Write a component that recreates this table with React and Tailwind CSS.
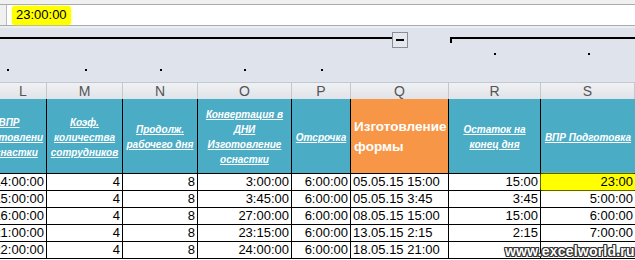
import React from "react";

const cols = [
  { letter: "L", w: "w-[47px]" },
  { letter: "M", w: "w-[76px]" },
  { letter: "N", w: "w-[75px]" },
  { letter: "O", w: "w-[94px]" },
  { letter: "P", w: "w-[59px]" },
  { letter: "Q", w: "w-[98px]" },
  { letter: "R", w: "w-[92px]" },
  { letter: "S", w: "w-[94px]" },
];

const rows = [
  ["14:00:00", "4", "8", "3:00:00", "6:00:00", "05.05.15 15:00", "15:00", "23:00"],
  ["15:00:00", "4", "8", "3:45:00", "6:00:00", "05.05.15 3:45", "3:45", "5:00:00"],
  ["16:00:00", "4", "8", "27:00:00", "6:00:00", "08.05.15 15:00", "15:00", "6:00:00"],
  ["21:00:00", "4", "8", "23:15:00", "6:00:00", "13.05.15 2:15", "2:15", "7:00:00"],
  ["22:00:00", "4", "8", "24:00:00", "6:00:00", "18.05.15 21:00", "", ""],
];

const dots = [
  "left-[7px] top-[41px]",
  "left-[85px] top-[41px]",
  "left-[160px] top-[41px]",
  "left-[244px] top-[41px]",
  "left-[321px] top-[41px]",
  "left-[494px] top-[25px]",
  "left-[588px] top-[25px]",
];

function HeadText({ children }) {
  return (
    <div className="text-center text-[10px] leading-[15px] font-bold italic underline text-white">
      {children}
    </div>
  );
}

export default function App() {
  return (
    <div className="w-[635px] h-[260px] overflow-hidden bg-white font-['Liberation_Sans',Arial,sans-serif] relative">
      {/* formula bar */}
      <div className="h-[4px] bg-[#f0f0f0]" />
      <div className="h-[22px] flex border-y border-[#a8abb0]">
        <div className="w-[7px] bg-[#f0f0f0] border-r border-[#b8bbc0]" />
        <div className="flex-1 bg-white flex items-center pl-[5px]">
          <span className="bg-[#ffff00] rounded-[3px] px-[4px] h-[19px] flex items-center text-[13px] text-black shadow-[0_0_2px_#ffff00]">
            23:00:00
          </span>
        </div>
      </div>
      <div className="h-[2px] bg-[#eceef2]" />

      {/* outline area */}
      <div className="relative h-[54px] bg-[#dfe3ec]">
        <div className="absolute left-0 top-[9px] w-[392px] h-[2px] bg-black" />
        <div className="absolute left-[392px] top-[4px] w-[16px] h-[16px] border border-[#8a8d94] bg-[#e4e7ee] flex items-center justify-center">
          <div className="w-[8px] h-[2px] bg-black" />
        </div>
        <div className="absolute left-[450px] top-[9px] w-[185px] h-[2px] bg-black" />
        <div className="absolute left-[450px] top-[9px] w-[2px] h-[6px] bg-black" />
        {dots.map((d, i) => (
          <div key={i} className={`absolute w-[2px] h-[2px] bg-black ${d}`} />
        ))}
      </div>

      {/* column letters */}
      <div className="flex h-[17px] border-t border-[#c3c7ce] bg-gradient-to-b from-[#f0f1f4] to-[#e0e3e8]">
        {cols.map((c) => (
          <div
            key={c.letter}
            className={`${c.w} shrink-0 border-r border-[#c3c7ce] flex items-center justify-center text-[14px] text-[#555]`}
          >
            {c.letter}
          </div>
        ))}
      </div>

      {/* header row */}
      <div className="flex h-[75px] border-b border-black bg-[#4bacc6]">
        <div className="w-[47px] shrink-0 border-r border-black overflow-hidden flex items-center pt-[2px]">
          <div className="w-[100px] shrink-0 ml-[-41px]">
            <HeadText>
              ВПР
              <br />
              Изготовлени
              <br />я оснастки
            </HeadText>
          </div>
        </div>
        <div className="w-[76px] shrink-0 border-r border-black flex items-center justify-center pt-[2px]">
          <HeadText>
            Коэф.
            <br />
            количества
            <br />
            сотрудников
          </HeadText>
        </div>
        <div className="w-[75px] shrink-0 border-r border-black flex items-center justify-center pt-[2px]">
          <HeadText>
            Продолж.
            <br />
            рабочего дня
          </HeadText>
        </div>
        <div className="w-[94px] shrink-0 border-r border-black flex items-center justify-center pt-[2px]">
          <HeadText>
            Конвертация в
            <br />
            ДНИ
            <br />
            Изготовление
            <br />
            оснастки
          </HeadText>
        </div>
        <div className="w-[59px] shrink-0 border-r border-black flex items-center justify-center pt-[2px]">
          <HeadText>Отсрочка</HeadText>
        </div>
        <div className="w-[98px] shrink-0 border-r border-black bg-[#f79646] flex items-center pl-[3px] pt-[2px]">
          <div className="text-[13.5px] leading-[20px] font-bold text-white">
            Изготовление
            <br />
            формы
          </div>
        </div>
        <div className="w-[92px] shrink-0 border-r border-black flex items-center justify-center pt-[2px]">
          <HeadText>
            Остаток на
            <br />
            конец дня
          </HeadText>
        </div>
        <div className="w-[94px] shrink-0 flex items-center justify-center pt-[2px]">
          <HeadText>ВПР Подготовка</HeadText>
        </div>
      </div>

      {/* data rows */}
      {rows.map((r, ri) => (
        <div key={ri} className="flex h-[17px] border-b border-black text-[13px] text-black">
          {r.map((v, ci) => (
            <div
              key={ci}
              className={`${cols[ci].w} shrink-0 ${ci < 7 ? "border-r border-black" : ""} overflow-hidden flex items-center whitespace-nowrap ${
                ci === 5 ? "justify-start pl-[2px]" : "justify-end pr-[2px]"
              } ${ri === 0 && ci === 7 ? "bg-[#ffff00] shadow-[0_0_3px_#ffff00]" : ""}`}
            >
              {v}
            </div>
          ))}
        </div>
      ))}

      {/* watermark */}
      <div className="absolute left-[505px] top-[241px] text-[14px] font-bold text-white tracking-[0.2px] [text-shadow:1px_0_0_#333,-1px_0_0_#333,0_1px_0_#333,0_-1px_0_#333,1px_1px_0_#333,-1px_-1px_0_#333,1px_-1px_0_#333,-1px_1px_0_#333]">
        www.excelworld.ru
      </div>
    </div>
  );
}
